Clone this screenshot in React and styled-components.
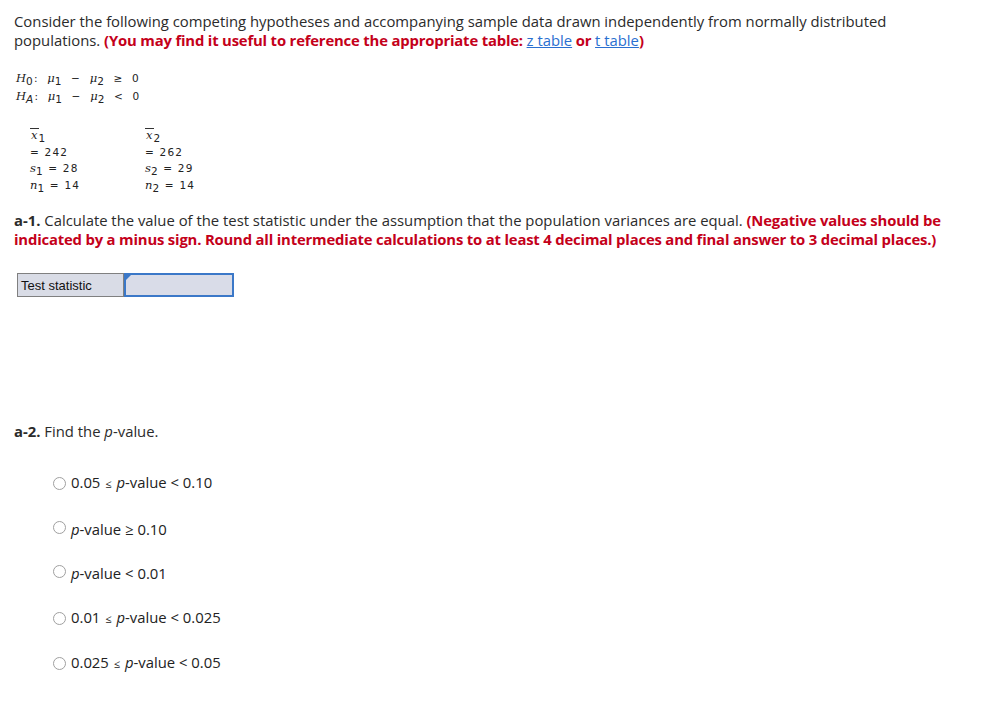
import React from "react";
import styled, { createGlobalStyle } from "styled-components";

const Global = createGlobalStyle`
  html, body { margin: 0; padding: 0; background: #fff; }
  body { font-family: "Open Sans", "Liberation Sans", sans-serif; color: #222; }
`;

const Page = styled.div`
  padding: 12px 14px 0 14px;
  width: 950px;
`;

const Para = styled.p`
  margin: 0;
  font-size: 14.85px;
  line-height: 19px;
  color: #2b2b2b;
`;

const Red = styled.strong`
  color: #c4001a;
  font-weight: 700;
  letter-spacing: -0.18px;
`;

const Link = styled.a`
  color: #2a6fd0;
  font-weight: 400;
  letter-spacing: 0;
  text-decoration: underline;
`;

const MathBlock = styled.div`
  margin-top: 19px;
  margin-left: 2px;
  font-family: "DejaVu Sans", sans-serif;
  font-size: 10.5px;
  letter-spacing: 1.2px;
  word-spacing: 4px;
  line-height: 18px;
  color: #222;
`;

const MathLine = styled.div`
  white-space: pre;
`;

const V = styled.i`
  font-family: "DejaVu Serif", serif;
  font-style: italic;
  font-size: 11.5px;
  letter-spacing: 0;
`;

const Sub = styled.sub`
  font-family: "DejaVu Sans", sans-serif;
  font-style: ${(p) => (p.it ? "italic" : "normal")};
  font-size: 10.5px;
  vertical-align: -3px;
  line-height: 0;
`;

const Stats = styled.div`
  margin-top: 21px;
  margin-left: 16px;
  display: grid;
  grid-template-columns: 115px 100px;
  font-family: "DejaVu Sans", sans-serif;
  font-size: 10.5px;
  letter-spacing: 1.2px;
  color: #222;
`;

const StatCol = styled.div`
  display: flex;
  flex-direction: column;
`;

const StatRow = styled.div`
  height: ${(p) => p.h || 16}px;
  line-height: ${(p) => p.h || 16}px;
  white-space: pre;
`;

const BarV = styled(V)`
  display: inline-block;
  border-top: 1px solid #333;
  line-height: 13px;
  padding: 0 1px;
`;

const Section = styled.div`
  margin-top: ${(p) => p.mt}px;
`;

const Table = styled.div`
  margin-top: 24px;
  margin-left: 3px;
  display: flex;
  width: 217px;
  height: 24px;
  border: 1px solid #808080;
  box-sizing: border-box;
  background: #d9dce6;
`;

const LabelCell = styled.div`
  width: 106px;
  border-right: 1px solid #808080;
  font-family: "Liberation Sans", Arial, sans-serif;
  font-size: 13px;
  color: #111;
  display: flex;
  align-items: center;
  padding-left: 3px;
  box-sizing: border-box;
`;

const InputCell = styled.div`
  position: relative;
  flex: 1;
  margin: -1px -1px -1px 0;
  border: 2px solid #3b78c8;
  background: #d9dce8;
`;

const Corner = styled.span`
  position: absolute;
  top: 0;
  left: 0;
  width: 0;
  height: 0;
  border-top: 5px solid #3b78c8;
  border-right: 5px solid transparent;
`;

const Options = styled.div`
  margin-top: 32px;
  margin-left: 39px;
  display: flex;
  flex-direction: column;
  gap: 25px;
`;

const Option = styled.label`
  display: flex;
  align-items: center;
  gap: 5px;
  font-size: 14.85px;
  line-height: 19px;
  color: #222;
  margin-top: ${(p) => p.mt || 0}px;
`;

const Radio = styled.span`
  flex: none;
  width: 13px;
  height: 13px;
  border-radius: 50%;
  border: 1px solid #a0a0a0;
  background: #fff;
  box-sizing: border-box;
  margin-top: ${(p) => (p.up ? "-5px" : "0")};
`;

const P = styled.i`
  font-style: italic;
`;

const Le = styled.span`
  font-size: 11px;
  margin: 0 1px;
`;

export default function App() {
  return (
    <>
      <Global />
      <Page>
        <Para>
          Consider the following competing hypotheses and accompanying sample data drawn independently from normally distributed
          populations. <Red>(You may find it useful to reference the appropriate table: <Link href="#">z table</Link> or <Link href="#">t table</Link>)</Red>
        </Para>

        <MathBlock>
          <MathLine><V>H</V><Sub>0</Sub>: <V>μ</V><Sub>1</Sub> − <V>μ</V><Sub>2</Sub> ≥ 0</MathLine>
          <MathLine><V>H</V><Sub it>A</Sub>: <V>μ</V><Sub>1</Sub> − <V>μ</V><Sub>2</Sub> &lt; 0</MathLine>
        </MathBlock>

        <Stats>
          <StatCol>
            <StatRow h={18}><BarV>x</BarV><Sub>1</Sub></StatRow>
            <StatRow>= 242</StatRow>
            <StatRow><V>s</V><Sub>1</Sub> = 28</StatRow>
            <StatRow h={18}><V>n</V><Sub>1</Sub> = 14</StatRow>
          </StatCol>
          <StatCol>
            <StatRow h={18}><BarV>x</BarV><Sub>2</Sub></StatRow>
            <StatRow>= 262</StatRow>
            <StatRow><V>s</V><Sub>2</Sub> = 29</StatRow>
            <StatRow h={18}><V>n</V><Sub>2</Sub> = 14</StatRow>
          </StatCol>
        </Stats>

        <Section mt={17}>
          <Para>
            <strong>a-1.</strong> Calculate the value of the test statistic under the assumption that the population variances are equal.{" "}
            <Red>(Negative values should be indicated by a minus sign. Round all intermediate calculations to at least 4 decimal places and final answer to 3 decimal places.)</Red>
          </Para>
          <Table>
            <LabelCell>Test statistic</LabelCell>
            <InputCell><Corner /></InputCell>
          </Table>
        </Section>

        <Section mt={125}>
          <Para><strong>a-2.</strong> Find the <P>p</P>-value.</Para>
          <Options>
            <Option><Radio /><span>0.05 <Le>≤</Le> <P>p</P>-value &lt; 0.10</span></Option>
            <Option mt={2}><Radio up /><span><P>p</P>-value ≥ 0.10</span></Option>
            <Option><Radio up /><span><P>p</P>-value &lt; 0.01</span></Option>
            <Option><Radio /><span>0.01 <Le>≤</Le> <P>p</P>-value &lt; 0.025</span></Option>
            <Option><Radio /><span>0.025 <Le>≤</Le> <P>p</P>-value &lt; 0.05</span></Option>
          </Options>
        </Section>
      </Page>
    </>
  );
}
